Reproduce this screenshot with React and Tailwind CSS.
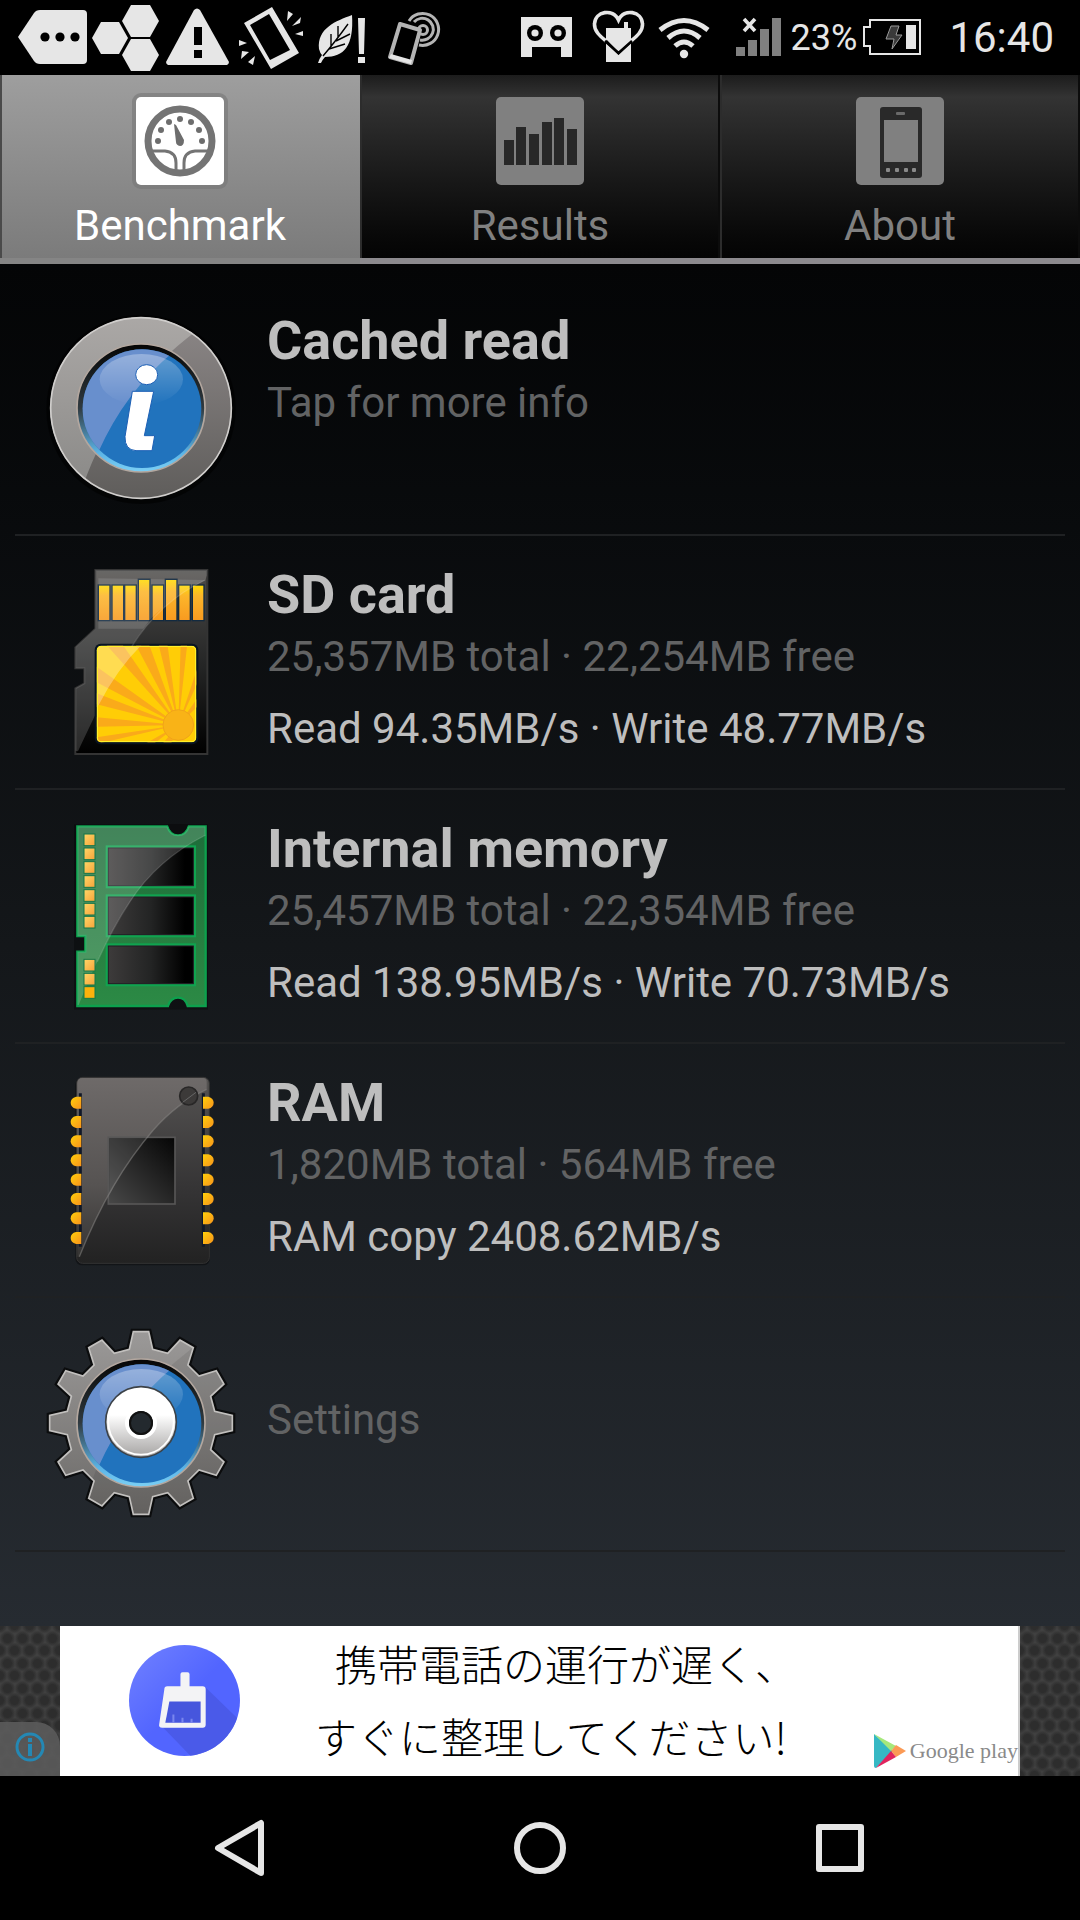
import React from 'react';

const tabs = [
    { id: 'benchmark', label: 'Benchmark', Icon: GaugeIcon },
    { id: 'results', label: 'Results', Icon: BarsIcon },
    { id: 'about', label: 'About', Icon: DeviceIcon },
];

const rows = [
    { Icon: InfoIcon, title: 'Cached read', detail: 'Tap for more info' },
    {
        Icon: SdCardIcon,
        title: 'SD card',
        detail: '25,357MB total · 22,254MB free',
        speed: 'Read 94.35MB/s · Write 48.77MB/s',
    },
    {
        Icon: MemoryIcon,
        title: 'Internal memory',
        detail: '25,457MB total · 22,354MB free',
        speed: 'Read 138.95MB/s · Write 70.73MB/s',
    },
    {
        Icon: RamIcon,
        title: 'RAM',
        detail: '1,820MB total · 564MB free',
        speed: 'RAM copy 2408.62MB/s',
    },
    { Icon: GearIcon, detail: 'Settings' },
];

/* ---------- status bar ---------- */

function StatusIcon({ x, w = 72, children }) {
    return (
        <svg width={w} height="75" viewBox={`${x} 0 ${w} 75`} fill="#e6e6e6" className="shrink-0" aria-hidden="true">
            {children}
        </svg>
    );
}

function StatusBar() {
    return (
        <header className="flex h-[75px] items-center justify-between bg-black pl-[18px] pr-[26px] text-[#e6e6e6]">
            <div className="flex">
                <StatusIcon x={18}>
                    <path d="M18 37 L34 13 Q36 10 40 10 H83 Q87 10 87 14 V60 Q87 64 83 64 H40 Q36 64 34 61 Z" />
                    <g fill="#000">
                        <circle cx="45" cy="37" r="4.6" />
                        <circle cx="60" cy="37" r="4.6" />
                        <circle cx="75" cy="37" r="4.6" />
                    </g>
                </StatusIcon>
                <StatusIcon x={90}>
                    <path d="M92 38 L101 22 H119 L128 38 L119 54 H101 Z" />
                    <path d="M122 21 L131 5 H150 L159 21 L150 37 H131 Z" />
                    <path d="M122 55 L131 39 H150 L159 55 L150 71 H131 Z" />
                </StatusIcon>
                <StatusIcon x={162}>
                    <path d="M194 10 Q197 7 200 10 L229 62 Q229 64 227 65 H168 Q166 64 166 62 Z" />
                    <path d="M194 27 h8 v18 h-8z M194 50 h8 v8 h-8z" fill="#000" />
                </StatusIcon>
                <StatusIcon x={234}>
                    <path fillRule="evenodd" d="M244 23 L272 7 L299 53 L271 69 Z M250 25 L269 14 L290 50 L270 60 Z" />
                    <path d="M288 11 l5 3 -6 7z M301 17 l-1 6 -8 3z M303 31 v5 l-8 -2z M239 40 l8 3 -8 3z M242 51 l7 1 -8 7z M255 56 l-2 9 -5 -3z" />
                </StatusIcon>
                <StatusIcon x={306}>
                    <path d="M352 15 C336 21 317 28 319 49 Q320 53 322 55 Q319 59 318 63 H321 Q323 59 325 57 C344 57 354 46 352 15 Z" />
                    <path d="M323 56 Q335 42 348 24 M331 47 v-13 M338 38 v-12 M329 49 L345 44 M336 41 L350 34" fill="none" stroke="#000" strokeWidth="1.4" />
                    <path d="M358 18 h7 l-1 36 h-5z M358 57 h7 v6 h-7z" />
                </StatusIcon>
                <StatusIcon x={378}>
                    <g fill="none" stroke="#b4b4b4">
                        <g strokeWidth="3">
                            <circle cx="423" cy="30" r="4.5" />
                            <path d="M414 22 A11 11 0 1 1 420 40" />
                            <path d="M409 21 A16 16 0 1 1 419 45" />
                        </g>
                        <path d="M400 24 L420 30 L411 63 L390 57 Z" strokeWidth="4" fill="#000" strokeLinejoin="round" />
                    </g>
                    <path d="M391 54 L412 60 L411 64 L389 58 Z" />
                </StatusIcon>
            </div>
            <div className="flex items-center">
                <StatusIcon x={510}>
                    <path d="M520 17 H571 V57 H560 V47 H531 V57 H520 Z" />
                    <circle cx="534" cy="33" r="8" fill="#000" />
                    <circle cx="557" cy="33" r="8" fill="#000" />
                    <circle cx="534" cy="33" r="3.6" />
                    <circle cx="557" cy="33" r="3.6" />
                </StatusIcon>
                <StatusIcon x={582}>
                    <path d="M605 41 C599 36 593 31 593.5 24 C594 11 612 8 617.5 20 C623 8 641 11 641.5 24 C642 31 636 36 630 41" fill="none" stroke="#e6e6e6" strokeWidth="3.6" />
                    <path d="M605 28 H623 V22 H627 V28 H630 V41 L617.5 52 L605 39 Z" />
                    <path d="M605 43 L617.5 55 L630 43 V62 H605 Z" />
                    <path d="M604 41 L617.5 53 L631 41" fill="none" stroke="#000" strokeWidth="2.5" />
                </StatusIcon>
                <StatusIcon x={654} w={60}>
                    <g fill="none" stroke="#e6e6e6" strokeWidth="5">
                        <path d="M659 30 Q683 11 707 30" />
                        <path d="M667 38 Q683 24 699 38" />
                        <path d="M674 46 Q683 38 692 46" />
                    </g>
                    <circle cx="683" cy="54" r="4.2" />
                </StatusIcon>
                <StatusIcon x={714} w={76}>
                    <path d="M735 47 h9 v9 h-9z M747 40 h9 v16 h-9z M759 29 h9 v27 h-9z M771 18 h9 v38 h-9z" fill="#808080" />
                    <path d="M743 19 l11 12 m0 -12 l-11 12" stroke="#e6e6e6" strokeWidth="3.6" />
                </StatusIcon>
                <span className="text-[36px] leading-none">23%</span>
                <StatusIcon x={858} w={72}>
                    <path d="M871 20 H921 V54 H871 V46 H865 V27 H871 Z" fill="none" stroke="#e6e6e6" strokeWidth="2" />
                    <path d="M907 25 h10 v24 h-10z" />
                    <path d="M892 26 h8 l-3 9 h6 l-10 14 2 -10 h-8z" fill="#3a3a3a" stroke="#999" strokeWidth="1" />
                </StatusIcon>
                <span className="ml-5 text-[42px] leading-none">16:40</span>
            </div>
        </header>
    );
}

/* ---------- tabs ---------- */

function GaugeIcon() {
    const dots = [[22, 44], [25, 33], [33, 25], [44, 22], [55, 25], [63, 33], [66, 44]];
    return (
        <svg width="88" height="88" viewBox="0 0 88 88" className="rounded-[5px] bg-white ring-4 ring-[#777777]/60" aria-hidden="true">
            <circle cx="44" cy="44" r="32" fill="none" stroke="#747474" strokeWidth="7" />
            {dots.map(([cx, cy]) => (
                <circle key={cx} cx={cx} cy={cy} r="3" fill="#6d6d6d" />
            ))}
            <path d="M38 27 L40 28 L48 43 Q48 49 44 49 Q40 48 40 45 Z" fill="#6d6d6d" />
            <path d="M16 54 H29 Q40 55 40 66 V74 M72 54 H59 Q48 55 48 66 V74" fill="none" stroke="#747474" strokeWidth="3" />
        </svg>
    );
}

function BarsIcon() {
    const bars = [[8, 43], [20, 30], [33, 37], [46, 25], [58, 21], [71, 32]];
    return (
        <svg width="88" height="88" viewBox="0 0 88 88" className="rounded-[5px] bg-[#808080]" aria-hidden="true">
            {bars.map(([x, y]) => (
                <rect key={x} x={x} y={y} width="10" height={68 - y} fill="#282828" />
            ))}
        </svg>
    );
}

function DeviceIcon() {
    return (
        <svg width="88" height="88" viewBox="0 0 88 88" className="rounded-[5px] bg-[#808080]" aria-hidden="true">
            <rect x="24" y="10" width="42" height="71" rx="3" fill="#292929" />
            <rect x="28" y="23" width="34" height="42" fill="#808080" />
            <rect x="40" y="15" width="9" height="3" rx="1" fill="#6a6a6a" />
            {[30, 39, 48, 56].map((x) => (
                <rect key={x} x={x} y="71" width="4" height="4" rx="1" fill="#8a8a8a" />
            ))}
        </svg>
    );
}

function Tabs() {
    return (
        <nav role="tablist" className="grid grid-cols-3">
            {tabs.map(({ id, label, Icon }, index) => (
                <button
                    key={id}
                    type="button"
                    role="tab"
                    aria-selected={index === 0}
                    className={
                        index === 0
                            ? 'flex flex-col items-center border-b-[6px] border-[#858585] bg-linear-to-b from-[#9e9e9e] to-[#7b7b7b] pt-[22px] text-white shadow-[inset_2px_0_0_#4a4a4a]'
                            : 'flex flex-col items-center border-b-[6px] border-[#8c8a8e] bg-linear-to-b from-[#1c1c1c] via-[#333333] via-12% to-[#040404] pt-[22px] text-[#808080] shadow-[inset_2px_0_0_#2c2c2c,inset_-2px_0_0_#0c0c0c]'
                    }
                >
                    <Icon />
                    <span className="mt-4 mb-2 text-[42px] leading-[49px]">{label}</span>
                </button>
            ))}
        </nav>
    );
}

/* ---------- list icons ---------- */

function BlueDisc({ id, cy }) {
    return (
        <>
            <defs>
                <linearGradient id={`${id}-rim`} x1="0" y1="0" x2="0" y2="1">
                    <stop offset="0" stopColor="#050505" />
                    <stop offset="0.5" stopColor="#303a40" />
                    <stop offset="0.85" stopColor="#5bb4e6" />
                    <stop offset="1" stopColor="#7cd0f5" />
                </linearGradient>
                <linearGradient id={`${id}-shine`} x1="0" y1="0" x2="0" y2="1">
                    <stop offset="0" stopColor="#ffffff" stopOpacity="0.3" />
                    <stop offset="1" stopColor="#ffffff" stopOpacity="0" />
                </linearGradient>
                <clipPath id={`${id}-disc`}>
                    <circle cx="336" cy={cy} r="178" />
                </clipPath>
            </defs>
            <circle cx="333" cy={cy - 2} r="192" fill={`url(#${id}-rim)`} stroke="#b3a79f" strokeWidth="5" />
            <circle cx="336" cy={cy} r="178" fill="#2173bd" />
            <path d={`M205 ${cy + 130} Q285 ${cy - 50} 430 ${cy - 170} L150 ${cy - 200} V${cy + 100} Z`} fill="#7494d0" fillOpacity="0.85" clipPath={`url(#${id}-disc)`} />
            <ellipse cx="334" cy={cy - 88} rx="125" ry="76" fill={`url(#${id}-shine)`} />
        </>
    );
}

function InfoIcon() {
    return (
        <svg viewBox="45 66 576 576" className="size-48 shrink-0" aria-hidden="true">
            <defs>
                <linearGradient id="info-ring" x1="0" y1="0" x2="0" y2="1">
                    <stop offset="0" stopColor="#8c8787" />
                    <stop offset="1" stopColor="#5f5d5b" />
                </linearGradient>
                <linearGradient id="info-gloss" x1="0" y1="0" x2="0" y2="1">
                    <stop offset="0" stopColor="#aca9a7" />
                    <stop offset="1" stopColor="#8b8a88" />
                </linearGradient>
                <clipPath id="info-shape">
                    <circle cx="333" cy="354" r="272" />
                </clipPath>
            </defs>
            <circle cx="333" cy="358" r="284" fill="#000" fillOpacity="0.6" />
            <circle cx="333" cy="354" r="272" fill="url(#info-ring)" />
            <path d="M160 584 Q260 300 500 122 V60 H40 V584 Z" fill="url(#info-gloss)" clipPath="url(#info-shape)" />
            <circle cx="333" cy="354" r="271" fill="none" stroke="#d0cecc" strokeWidth="5" />
            <BlueDisc id="info" cy={356} />
            <g fill="#fff" stroke="#1c5fb5" strokeWidth="3">
                <ellipse cx="350" cy="254" rx="33" ry="30" />
                <path d="M307 304 H371 L343 437 H374 L366 482 H318 Q284 480 285 440 Z" />
            </g>
        </svg>
    );
}

const pins = [[147, 107], [188, 107], [226, 107], [267, 90], [308, 107], [348, 90], [388, 107], [429, 107]];

function SdCardIcon() {
    return (
        <svg viewBox="-15 48 576 576" className="size-48 shrink-0" aria-hidden="true">
            <defs>
                <linearGradient id="sd-body" x1="0" y1="0" x2="0" y2="1">
                    <stop offset="0" stopColor="#4c4a48" />
                    <stop offset="0.5" stopColor="#262727" />
                    <stop offset="1" stopColor="#000" />
                </linearGradient>
                <linearGradient id="sd-pin" x1="0" y1="0" x2="0" y2="1">
                    <stop offset="0" stopColor="#ffdc05" />
                    <stop offset="0.3" stopColor="#fcb62a" />
                    <stop offset="1" stopColor="#f89a20" />
                </linearGradient>
                <clipPath id="sd-label">
                    <rect x="140" y="287" width="299" height="290" rx="14" />
                </clipPath>
                <clipPath id="sd-shape">
                    <path d="M136 60 H472 V612 H76 V415 L103 400 V355 H76 V292 L136 236 Z" />
                </clipPath>
            </defs>
            <path d="M136 60 H472 V612 H76 V415 L103 400 V355 H76 V292 L136 236 Z" fill="url(#sd-body)" stroke="#343434" strokeWidth="6" />
            <path d="M466 90 Q310 165 220 330 Q170 420 84 604 L60 600 V50 H480 Z" fill="#ffffff" fillOpacity="0.16" clipPath="url(#sd-shape)" />
            <g fill="url(#sd-pin)" stroke="#122a40" strokeWidth="4">
                {pins.map(([x, y]) => (
                    <rect key={x} x={x - 2} y={y - 2} width="35" height={214 - y} />
                ))}
            </g>
            <path d="M466 90 Q400 122 348 168 Q310 190 280 236 H145 V85 Z" fill="#fff" fillOpacity="0.12" />
            <rect x="134" y="281" width="311" height="302" rx="18" fill="#081422" />
            <g clipPath="url(#sd-label)">
                <rect x="140" y="287" width="299" height="290" fill="#ffcd06" />
                <g fill="#faaa1a">
                    <path d="M385 525 L140 582 V562 Z M385 525 L140 530 V502 Z M385 525 L140 463 V430 Z M385 525 L140 397 V350 Z M385 525 L165 280 H215 Z M385 525 L255 280 H296 Z M385 525 L325 280 H352 Z M385 525 L392 280 H412 Z M385 525 L442 355 V400 Z M385 525 L442 445 V470 Z M385 525 L270 590 H300 Z M385 525 L360 590 H330 Z" />
                    <circle cx="385" cy="525" r="46" fill="#f9b317" stroke="#f0a41a" strokeWidth="3" />
                </g>
                <path d="M285 275 Q205 350 146 465 L130 480 V275 Z" fill="#fff" fillOpacity="0.3" />
                <rect x="142" y="289" width="295" height="286" rx="12" fill="none" stroke="#fff02a" strokeWidth="4" />
            </g>
            <path d="M466 90 Q330 155 245 290" fill="none" stroke="#fff" strokeOpacity="0.15" strokeWidth="4" />
        </svg>
    );
}

function MemoryIcon() {
    return (
        <svg viewBox="-15 45 576 576" className="size-48 shrink-0" aria-hidden="true">
            <defs>
                <linearGradient id="mem-board" x1="0" y1="0" x2="0" y2="1">
                    <stop offset="0" stopColor="#1d6c39" />
                    <stop offset="1" stopColor="#2c8a45" />
                </linearGradient>
                <linearGradient id="mem-chip" x1="0" y1="0" x2="1" y2="0">
                    <stop offset="0" stopColor="#3d3b3b" />
                    <stop offset="0.5" stopColor="#232424" />
                    <stop offset="0.9" stopColor="#000" />
                </linearGradient>
                <linearGradient id="mem-pin" x1="0" y1="0" x2="1" y2="1">
                    <stop offset="0" stopColor="#ffd667" />
                    <stop offset="1" stopColor="#f7a33a" />
                </linearGradient>
                <clipPath id="mem-shape">
                    <path d="M82 64 H352 Q360 90 384 90 Q408 90 416 64 H467 V603 H413 Q406 578 384 578 Q362 578 354 603 H82 V440 H106 V393 H82 Z" />
                </clipPath>
            </defs>
            <rect x="72" y="58" width="402" height="556" fill="#000" fillOpacity="0.3" />
            <path d="M82 64 H352 Q360 90 384 90 Q408 90 416 64 H467 V603 H413 Q406 578 384 578 Q362 578 354 603 H82 V440 H106 V393 H82 Z" fill="url(#mem-board)" stroke="#0da04d" strokeWidth="7" />
            <path d="M354 58 Q362 88 384 88 Q406 88 414 58 Z" fill="#0c0d0f" />
            {[129, 276, 423].map((y) => (
                <g key={y}>
                    <rect x="167" y={y - 8} width="271" height="129" fill="#10a34f" />
                    <rect x="175" y={y} width="255" height="113" fill="url(#mem-chip)" stroke="#241a24" strokeWidth="3" />
                </g>
            ))}
            <path d="M467 90 Q320 165 240 290 Q170 390 86 600 H60 V50 H480 Z" fill="#fff" fillOpacity="0.17" clipPath="url(#mem-shape)" />
            <path d="M467 90 Q320 165 240 290 Q190 365 142 470" fill="none" stroke="#fff" strokeOpacity="0.15" strokeWidth="4" />
            {[87, 129, 170, 212, 254, 295, 334, 463, 505, 545].map((y) => (
                <rect key={y} x="102" y={y} width="33" height="35" fill={y === 545 ? '#fdb20c' : 'url(#mem-pin)'} stroke="#12774a" strokeWidth="3" />
            ))}
        </svg>
    );
}

function RamIcon() {
    return (
        <svg viewBox="-15 42 576 576" className="size-48 shrink-0" aria-hidden="true">
            <defs>
                <linearGradient id="ram-body" x1="0" y1="0" x2="0" y2="1">
                    <stop offset="0" stopColor="#555352" />
                    <stop offset="0.6" stopColor="#353435" />
                    <stop offset="1" stopColor="#222" />
                </linearGradient>
                <linearGradient id="ram-gloss" x1="0" y1="0" x2="0" y2="1">
                    <stop offset="0" stopColor="#6e6a69" />
                    <stop offset="0.6" stopColor="#565352" />
                    <stop offset="1" stopColor="#353433" />
                </linearGradient>
                <linearGradient id="ram-die" x1="0" y1="1" x2="1" y2="0">
                    <stop offset="0" stopColor="#484848" />
                    <stop offset="1" stopColor="#050505" />
                </linearGradient>
                <linearGradient id="ram-pin" x1="0" y1="0" x2="1" y2="1">
                    <stop offset="0" stopColor="#ffcf0a" />
                    <stop offset="1" stopColor="#f7931d" />
                </linearGradient>
            </defs>
            <rect x="76" y="54" width="404" height="562" rx="20" fill="#000" fillOpacity="0.35" />
            <rect x="80" y="52" width="398" height="558" rx="18" fill="url(#ram-body)" stroke="#333" strokeWidth="3" />
            <path d="M88 590 Q180 360 310 210 Q380 130 470 88 V66 Q470 54 458 54 H98 Q82 54 82 70 V590 Z" fill="url(#ram-gloss)" />
            <rect x="175" y="232" width="200" height="200" fill="url(#ram-die)" stroke="#575656" strokeWidth="5" />
            <path d="M178 235 H290 Q225 315 178 405 Z" fill="#fff" fillOpacity="0.1" />
            <path d="M88 590 Q180 360 310 210 Q380 130 470 88" fill="none" stroke="#8b8988" strokeOpacity="0.5" strokeWidth="4" />
            <circle cx="416" cy="108" r="27" fill="#3c3a39" stroke="#282727" strokeWidth="5" />
            <path d="M398 127 L438 97" stroke="#666" strokeWidth="3" />
            <path d="M91 100 V560 M460 100 V560" stroke="#101828" strokeWidth="9" />
            {[128, 186, 244, 301, 359, 417, 475, 534].map((y) => (
                <g key={y} fill="url(#ram-pin)">
                    <path d={`M94 ${y - 18} H78 Q62 ${y - 14} 62 ${y} Q62 ${y + 14} 78 ${y + 18} H94 Z`} />
                    <path d={`M459 ${y - 18} H475 Q491 ${y - 14} 491 ${y} Q491 ${y + 14} 475 ${y + 18} H459 Z`} />
                </g>
            ))}
        </svg>
    );
}

// twelve teeth around the hub, joined into one outline
const gearPath = Array.from({ length: 12 }, (_, i) => {
    const a = (i * Math.PI) / 6;
    return [[-35, -221], [-23, -274], [23, -274], [35, -221]]
        .map(([x, y]) => {
            const px = 333 + x * Math.cos(a) - y * Math.sin(a);
            const py = 342 + x * Math.sin(a) + y * Math.cos(a);
            return `${px.toFixed(1)} ${py.toFixed(1)}`;
        })
        .join(' L');
}).join(' L');

function GearIcon() {
    return (
        <svg viewBox="45 57 576 576" className="size-48 shrink-0" aria-hidden="true">
            <defs>
                <linearGradient id="gear-body" x1="0" y1="0" x2="0" y2="1">
                    <stop offset="0" stopColor="#9b9998" />
                    <stop offset="1" stopColor="#6c6a68" />
                </linearGradient>
                <linearGradient id="gear-hub" x1="0" y1="0" x2="0" y2="1">
                    <stop offset="0.4" stopColor="#fff" />
                    <stop offset="1" stopColor="#a5a3a2" />
                </linearGradient>
                <clipPath id="gear-shape">
                    <path d={`M${gearPath} Z`} />
                </clipPath>
            </defs>
            <path d={`M${gearPath} Z`} fill="#0b0c0d" stroke="#0b0c0d" strokeWidth="18" />
            <path d={`M${gearPath} Z`} fill="url(#gear-body)" />
            <path d="M188 510 Q260 290 490 115 L650 60 V640 H150 Z" fill="#000" fillOpacity="0.08" clipPath="url(#gear-shape)" />
            <path d={`M${gearPath} Z`} fill="none" stroke="#c2c0be" strokeWidth="5" />
            <BlueDisc id="gear" cy={344} />
            <circle cx="333" cy="339" r="106" fill="url(#gear-hub)" stroke="#3c4248" strokeWidth="5" />
            <circle cx="333" cy="339" r="98" fill="none" stroke="#fff" strokeWidth="5" />
            <circle cx="333" cy="342" r="42" fill="#23292e" stroke="#fff" strokeWidth="12" />
            <circle cx="333" cy="342" r="33" fill="#23292e" stroke="#111" strokeWidth="6" />
        </svg>
    );
}

/* ---------- list ---------- */

function BenchmarkList() {
    return (
        <ul className="px-[15px] pt-[18px]">
            {rows.map(({ Icon, title, detail, speed }) => (
                <li key={detail} className="border-b-2 border-[#1f2123]">
                    <button type="button" className="flex h-[252px] w-full items-center gap-[30px] pl-[30px] text-left">
                        <Icon />
                        <span className={title ? 'flex flex-col self-start pt-[26px]' : 'flex flex-col pb-2'}>
                            {title && (
                                <span className="text-[54px] leading-[65px] font-bold text-[#bebebe]">{title}</span>
                            )}
                            <span className="text-[42px] leading-[60px] text-[#626364]">{detail}</span>
                            {speed && (
                                <span className="mt-3 text-[42px] leading-[60px] text-[#bebebe]">{speed}</span>
                            )}
                        </span>
                    </button>
                </li>
            ))}
        </ul>
    );
}

/* ---------- ad ---------- */

function AdBanner() {
    return (
        <aside className="relative flex h-[150px] bg-[#404040] bg-[radial-gradient(circle_at_center,#2d2d2d_4px,transparent_8px),radial-gradient(circle_at_center,#2d2d2d_4px,transparent_8px)] bg-[size:15px_25px] bg-[position:0_0,7px_12px] px-[60px]">
            <a href="#ad" className="flex grow items-center border-r-2 border-[#cccccc] bg-white pl-[69px] text-black">
                <svg viewBox="0 0 111 111" className="size-28 shrink-0" aria-hidden="true">
                    <defs>
                        <linearGradient id="brush-disc" x1="0" y1="0" x2="1" y2="1">
                            <stop offset="0.1" stopColor="#6b7cff" />
                            <stop offset="0.5" stopColor="#5265ff" />
                        </linearGradient>
                        <clipPath id="brush-clip">
                            <circle cx="55" cy="55" r="55" />
                        </clipPath>
                    </defs>
                    <circle cx="55" cy="55" r="55" fill="url(#brush-disc)" />
                    <path d="M76 42 L111 76 V111 H62 L34 82 H74 Z" fill="#4858e4" fillOpacity="0.8" clipPath="url(#brush-clip)" />
                    <path d="M51 29 Q51 27 53 27 H58 Q60 27 60 29 V41 H73 Q76 41 76 44 V79 Q76 82 73 82 H33 Q29 82 30 78 L35 44 Q35 41 38 41 H51 Z" fill="#f3f3f5" />
                    <path d="M40 56 H71 V77 H36 Z" fill="#4656dd" />
                    <path d="M44 77 V69 M53 77 V72 M62 77 V73" stroke="#7986ee" strokeWidth="2" />
                </svg>
                <p className="grow pb-1 pl-[74px] font-['Noto_Sans_CJK_JP',sans-serif] text-[42px] leading-[73px] font-light whitespace-nowrap">
                    <span className="block pl-5">携帯電話の運行が遅く、</span>
                    <span className="block">すぐに整理してください!</span>
                </p>
                <span className="flex items-center gap-1 self-end pb-2 font-['Liberation_Serif',serif] text-[22px] leading-[34px] whitespace-nowrap text-[#8a8a8a]">
                    <svg viewBox="0 0 32 34" className="h-[34px] w-8" aria-hidden="true">
                        <path d="M0 0 L19 17 L2 34 Q0 34 0 32 Z" fill="#36b8c4" />
                        <path d="M0 0 L22 12 L17 17 Z" fill="#a6e87c" />
                        <path d="M22 11 L32 17 L22 23 L17 17 Z" fill="#fb9a55" />
                        <path d="M17 17 L22 23 L2 34 Z" fill="#e0245e" />
                    </svg>
                    Google play
                </span>
            </a>
            <button
                type="button"
                aria-label="Ad information"
                className="absolute bottom-0 left-0 flex h-[54px] w-[60px] items-center justify-center rounded-tr-[24px] bg-[#5b5b5b]/90 pb-1"
            >
                <svg viewBox="0 0 30 30" className="size-[30px]" fill="none" stroke="#2488b4" aria-hidden="true">
                    <circle cx="15" cy="15" r="13" strokeWidth="3" />
                    <path d="M15 6 v4 M15 12 v12" strokeWidth="4" />
                </svg>
            </button>
        </aside>
    );
}

/* ---------- navigation bar ---------- */

function NavBar() {
    return (
        <nav className="grid h-36 grid-cols-3 bg-black px-[90px]">
            <button type="button" aria-label="Back" className="flex items-center justify-center">
                <svg viewBox="0 0 60 60" className="size-[60px]" fill="none" stroke="#e6e6e6" strokeWidth="6" strokeLinejoin="round" aria-hidden="true">
                    <path d="M8 30 L51 5 V55 Z" />
                </svg>
            </button>
            <button type="button" aria-label="Home" className="flex items-center justify-center">
                <svg viewBox="0 0 60 60" className="size-[60px]" fill="none" stroke="#e6e6e6" strokeWidth="6" aria-hidden="true">
                    <circle cx="30" cy="30" r="23" />
                </svg>
            </button>
            <button type="button" aria-label="Recent apps" className="flex items-center justify-center">
                <svg viewBox="0 0 60 60" className="size-[60px]" fill="none" stroke="#e6e6e6" strokeWidth="6" strokeLinejoin="round" aria-hidden="true">
                    <rect x="9" y="9" width="42" height="42" />
                </svg>
            </button>
        </nav>
    );
}

function App() {
    return (
        <div className="flex min-h-screen flex-col bg-black font-['Roboto',sans-serif]">
            <StatusBar />
            <Tabs />
            <main className="grow bg-linear-to-b from-[#040506] via-[#14171a] to-[#262b31]">
                <BenchmarkList />
            </main>
            <AdBanner />
            <NavBar />
        </div>
    );
}

export default App;
